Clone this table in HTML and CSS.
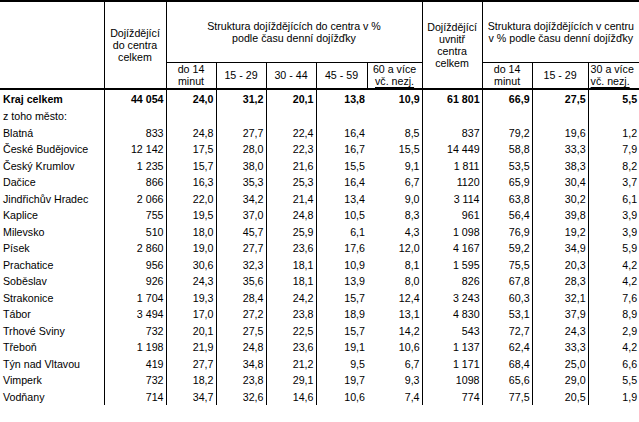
FILE: index.html
```html
<!DOCTYPE html>
<html lang="cs">
<head>
<meta charset="utf-8">
<title>Dojížďka do center</title>
<link rel="stylesheet" href="styles.css">
</head>
<body>
<div class="sheet">
<table class="grid">
<colgroup>
<col class="w-label"><col class="w62"><col class="w50"><col class="w50"><col class="w50"><col class="w51"><col class="w55"><col class="w60"><col class="w50"><col class="w56"><col class="w51">
</colgroup>
<thead>
<tr class="h1">
<th rowspan="2" class="b-r b-b2"></th>
<th rowspan="2" class="b-r b-b2">Dojíždějící<br>do centra<br>celkem</th>
<th colspan="5" class="b-r b-b1">Struktura dojíždějících do centra v %<br>podle času denní dojížďky</th>
<th rowspan="2" class="b-r b-b2">Dojíždějící<br>uvnitř<br>centra<br>celkem</th>
<th colspan="3" class="b-b1">Struktura dojíždějících v centru<br>v % podle času denní dojížďky</th>
</tr>
<tr class="h2">
<th class="b-r b-b2">do 14<br>minut</th>
<th class="b-r b-b2">15 - 29</th>
<th class="b-r b-b2">30 - 44</th>
<th class="b-r b-b2">45 - 59</th>
<th class="b-r b-b2">60 a více<br><span class="ul">vč. nezj.</span></th>
<th class="b-r b-b2">do 14<br>minut</th>
<th class="b-r b-b2">15 - 29</th>
<th class="b-b2 edge">30 a více<br><span class="ul">vč. nezj.</span></th>
</tr>
</thead>
<tbody>
<tr class="total"><td>Kraj celkem</td><td>44 054</td><td>24,0</td><td>31,2</td><td>20,1</td><td>13,8</td><td>10,9</td><td>61 801</td><td>66,9</td><td>27,5</td><td>5,5</td></tr>
<tr><td>z toho město:</td><td></td><td></td><td></td><td></td><td></td><td></td><td></td><td></td><td></td><td></td></tr>
<tr><td>Blatná</td><td>833</td><td>24,8</td><td>27,7</td><td>22,4</td><td>16,4</td><td>8,5</td><td>837</td><td>79,2</td><td>19,6</td><td>1,2</td></tr>
<tr><td>České Budějovice</td><td>12 142</td><td>17,5</td><td>28,0</td><td>22,3</td><td>16,7</td><td>15,5</td><td>14 449</td><td>58,8</td><td>33,3</td><td>7,9</td></tr>
<tr><td>Český Krumlov</td><td>1 235</td><td>15,7</td><td>38,0</td><td>21,6</td><td>15,5</td><td>9,1</td><td>1 811</td><td>53,5</td><td>38,3</td><td>8,2</td></tr>
<tr><td>Dačice</td><td>866</td><td>16,3</td><td>35,3</td><td>25,3</td><td>16,4</td><td>6,7</td><td>1120</td><td>65,9</td><td>30,4</td><td>3,7</td></tr>
<tr><td>Jindřichův Hradec</td><td>2 066</td><td>22,0</td><td>34,2</td><td>21,4</td><td>13,4</td><td>9,0</td><td>3 114</td><td>63,8</td><td>30,2</td><td>6,1</td></tr>
<tr><td>Kaplice</td><td>755</td><td>19,5</td><td>37,0</td><td>24,8</td><td>10,5</td><td>8,3</td><td>961</td><td>56,4</td><td>39,8</td><td>3,9</td></tr>
<tr><td>Milevsko</td><td>510</td><td>18,0</td><td>45,7</td><td>25,9</td><td>6,1</td><td>4,3</td><td>1 098</td><td>76,9</td><td>19,2</td><td>3,9</td></tr>
<tr><td>Písek</td><td>2 860</td><td>19,0</td><td>27,7</td><td>23,6</td><td>17,6</td><td>12,0</td><td>4 167</td><td>59,2</td><td>34,9</td><td>5,9</td></tr>
<tr><td>Prachatice</td><td>956</td><td>30,6</td><td>32,3</td><td>18,1</td><td>10,9</td><td>8,1</td><td>1 595</td><td>75,5</td><td>20,3</td><td>4,2</td></tr>
<tr><td>Soběslav</td><td>926</td><td>24,3</td><td>35,6</td><td>18,1</td><td>13,9</td><td>8,0</td><td>826</td><td>67,8</td><td>28,3</td><td>4,2</td></tr>
<tr><td>Strakonice</td><td>1 704</td><td>19,3</td><td>28,4</td><td>24,2</td><td>15,7</td><td>12,4</td><td>3 243</td><td>60,3</td><td>32,1</td><td>7,6</td></tr>
<tr><td>Tábor</td><td>3 494</td><td>17,0</td><td>27,2</td><td>23,8</td><td>18,9</td><td>13,1</td><td>4 830</td><td>53,1</td><td>37,9</td><td>8,9</td></tr>
<tr><td>Trhové Sviny</td><td>732</td><td>20,1</td><td>27,5</td><td>22,5</td><td>15,7</td><td>14,2</td><td>543</td><td>72,7</td><td>24,3</td><td>2,9</td></tr>
<tr><td>Třeboň</td><td>1 198</td><td>21,9</td><td>24,8</td><td>23,6</td><td>19,1</td><td>10,6</td><td>1 137</td><td>62,4</td><td>33,3</td><td>4,2</td></tr>
<tr><td>Týn nad Vltavou</td><td>419</td><td>27,7</td><td>34,8</td><td>21,2</td><td>9,5</td><td>6,7</td><td>1 171</td><td>68,4</td><td>25,0</td><td>6,6</td></tr>
<tr><td>Vimperk</td><td>732</td><td>18,2</td><td>23,8</td><td>29,1</td><td>19,7</td><td>9,3</td><td>1098</td><td>65,6</td><td>29,0</td><td>5,5</td></tr>
<tr><td>Vodňany</td><td>714</td><td>34,7</td><td>32,6</td><td>14,6</td><td>10,6</td><td>7,4</td><td>774</td><td>77,5</td><td>20,5</td><td>1,9</td></tr>
</tbody>
</table>
</div>
</body>
</html>
```
FILE: styles.css
```css
html, body {
  margin: 0;
  padding: 0;
  background: #fff;
  color: #000;
}

body {
  font-family: "Liberation Sans", Arial, sans-serif;
  font-size: 8pt;
  line-height: 12px;
}

.sheet {
  width: 639px;
  border-top: 2px solid #000;
}

.grid {
  width: 639px;
  table-layout: fixed;
  border-collapse: collapse;
}

.w-label { width: 104px; }
.w62 { width: 62px; }
.w50 { width: 50px; }
.w51 { width: 51px; }
.w55 { width: 55px; }
.w56 { width: 56px; }
.w60 { width: 60px; }

.grid th {
  font-weight: normal;
  text-align: center;
  vertical-align: middle;
  padding: 0 1px;
  white-space: nowrap;
  overflow: hidden;
}

.grid th.edge {
  text-align: left;
  padding-left: 2px;
}

.h1 { height: 60px; }
.h2 { height: 27px; }

.b-r { border-right: 1px solid #000; }
.b-b1 { border-bottom: 1px solid #000; }
.b-b2 { border-bottom: 2px solid #000; }

.ul {
  text-decoration: underline;
  text-underline-offset: 2px;
}

.grid td {
  height: 16.5px;
  padding: 0 2px 0 3px;
  text-align: right;
  vertical-align: middle;
  white-space: nowrap;
  overflow: hidden;
}

.grid td:first-child {
  text-align: left;
  padding-left: 3px;
}

.grid td:nth-child(1),
.grid td:nth-child(2),
.grid td:nth-child(3),
.grid td:nth-child(4),
.grid td:nth-child(5),
.grid td:nth-child(7),
.grid td:nth-child(8),
.grid td:nth-child(9),
.grid td:nth-child(10) {
  border-right: 1px solid #000;
}

.total td {
  font-weight: bold;
  height: 18px;
}
```
